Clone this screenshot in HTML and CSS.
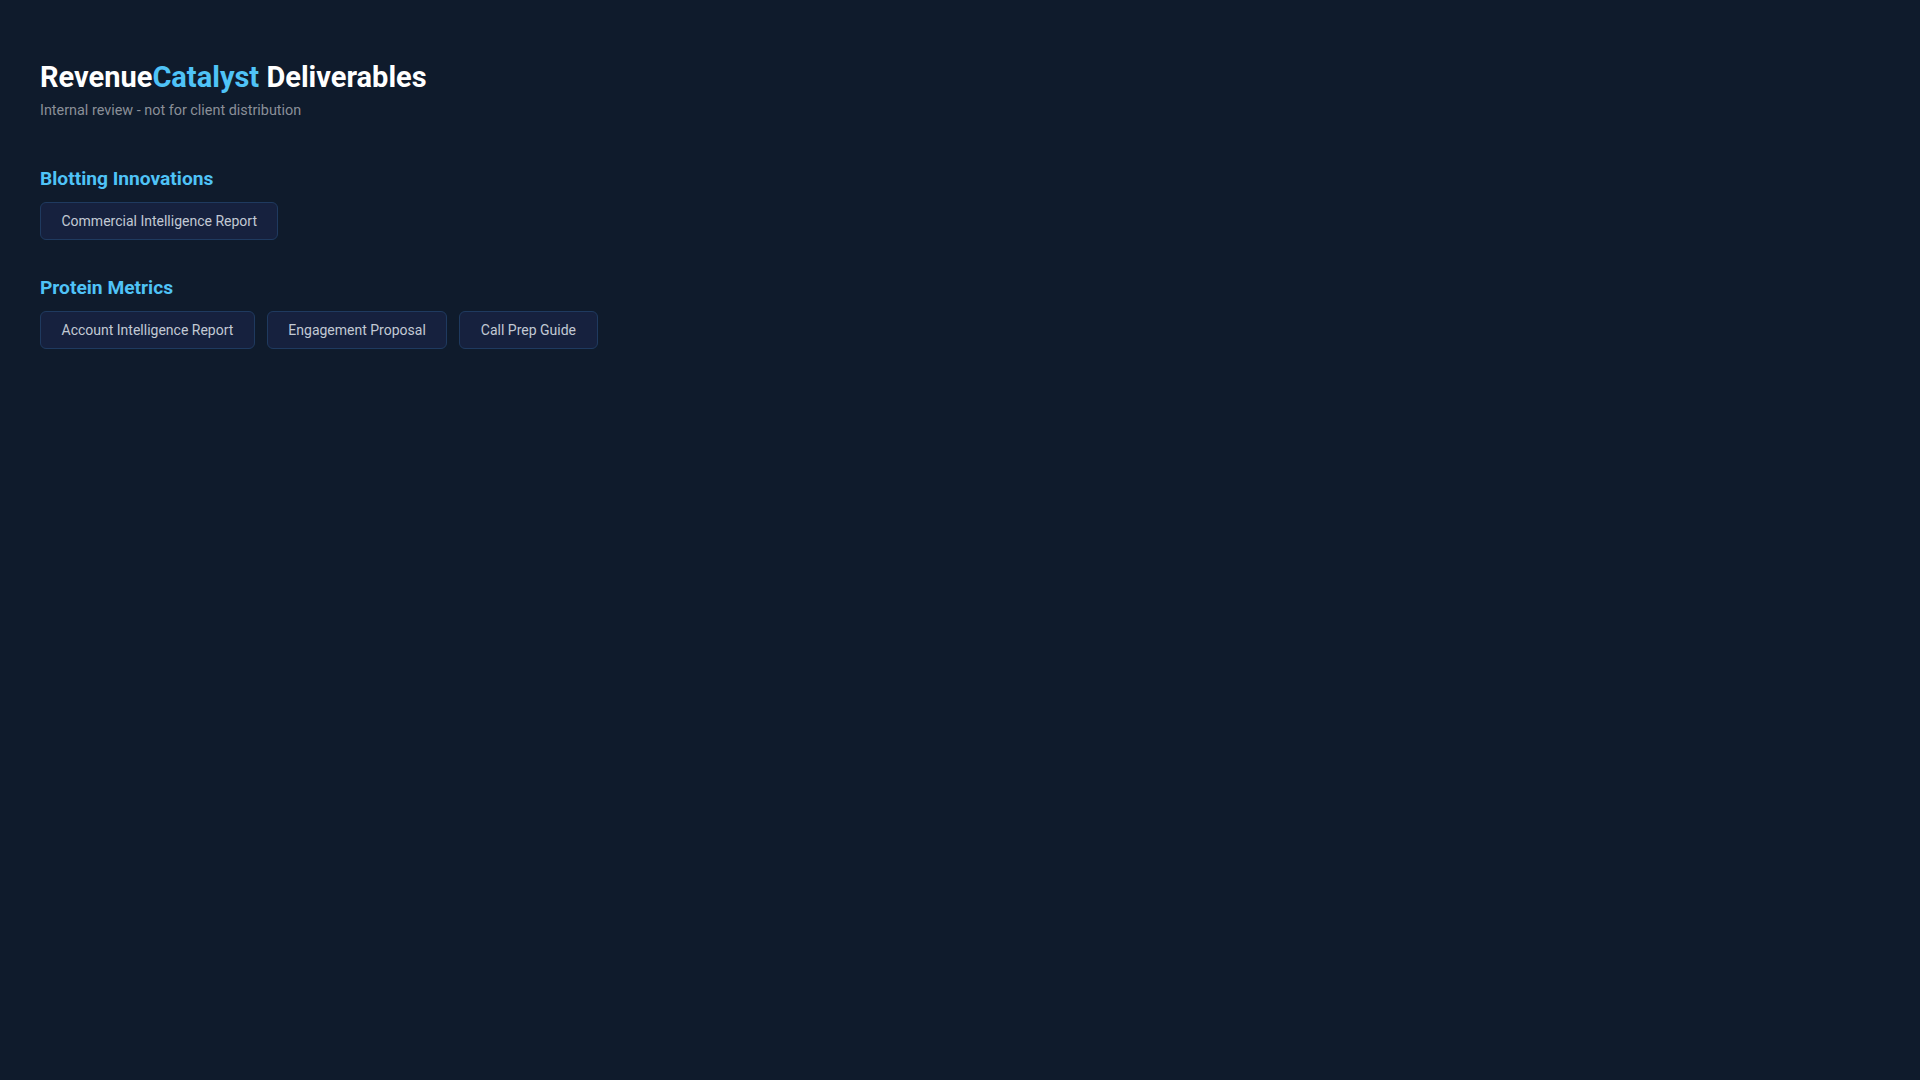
FILE: index.html
```html
<!DOCTYPE html>
<html lang="en">
<head>
<meta charset="utf-8">
<title>RevenueCatalyst Deliverables</title>
<link rel="stylesheet" href="styles.css">
</head>
<body>
<main class="page">
  <header class="header">
    <h1 class="title">Revenue<span class="accent">Catalyst</span> Deliverables</h1>
    <p class="subtitle">Internal review - not for client distribution</p>
  </header>
  <section class="client">
    <h2 class="client-name">Blotting Innovations</h2>
    <div class="docs">
      <a class="doc" href="#">Commercial Intelligence Report</a>
    </div>
  </section>
  <section class="client">
    <h2 class="client-name">Protein Metrics</h2>
    <div class="docs">
      <a class="doc" href="#">Account Intelligence Report</a>
      <a class="doc" href="#">Engagement Proposal</a>
      <a class="doc" href="#">Call Prep Guide</a>
    </div>
  </section>
</main>
</body>
</html>
```
FILE: styles.css
```css
html, body {
  margin: 0;
  padding: 0;
  background: #0f1b2c;
  font-family: Roboto, "Liberation Sans", Arial, sans-serif;
}
.page {
  padding: 60px 40px 40px;
}
.header {
  margin-bottom: 49px;
}
.title {
  margin: 0;
  font-size: 29px;
  font-weight: 700;
  color: #ffffff;
  line-height: 34px;
}
.accent {
  color: #4fc3f7;
}
.subtitle {
  margin: 8px 0 0;
  font-size: 14.4px;
  line-height: 17px;
  color: #8a8f98;
}
.client {
  margin-bottom: 37px;
}
.client-name {
  margin: 0 0 12px;
  font-size: 19.2px;
  font-weight: 700;
  color: #4fc3f7;
  line-height: 22px;
}
.docs {
  display: flex;
  gap: 12px;
}
.doc {
  display: inline-block;
  padding: 10px 20.5px;
  font-size: 14px;
  line-height: 16px;
  color: #c2c9d4;
  text-decoration: none;
  background: #16213e;
  border: 1px solid #1f3a5f;
  border-radius: 6px;
}
```
